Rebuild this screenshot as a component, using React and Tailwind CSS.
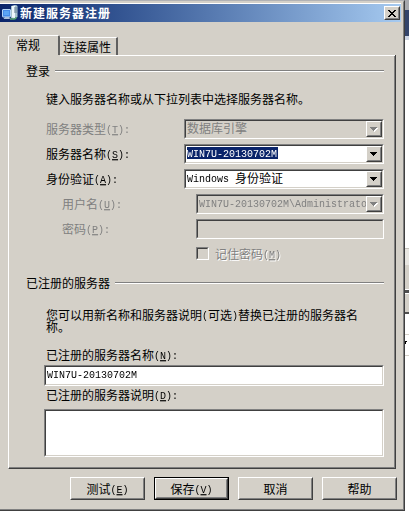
import { Fragment } from "react";

const sunken =
  "border border-t-[#808080] border-l-[#808080] border-r-white border-b-white";
const sunkenInner =
  "border border-t-[#404040] border-l-[#404040] border-r-[#d4d0c8] border-b-[#d4d0c8]";
const raised =
  "border border-t-white border-l-white border-r-[#404040] border-b-[#404040]";
const raisedInner =
  "border border-t-[#d4d0c8] border-l-[#d4d0c8] border-r-[#808080] border-b-[#808080]";

// Latin runs are half the width of a Chinese character
const latin =
  "inline-block origin-[50%_80%] scale-y-[1.18] align-[1px] whitespace-pre font-['Liberation_Mono',monospace] text-[10px] leading-[9px]";

function Text({ children }) {
  return children.split(/([\x20-\x7e]+)/).map((part, index) =>
    /^[\x20-\x7e]/.test(part) ? (
      <span key={index} className={latin}>
        {part}
      </span>
    ) : (
      <Fragment key={index}>{part}</Fragment>
    )
  );
}

function Label({ text, hotkey, colon }) {
  return (
    <>
      {text}
      {hotkey && (
        <span className={latin}>
          (
          <span className="underline decoration-1 underline-offset-1">
            {hotkey}
          </span>
          {colon ? "):" : ")"}
        </span>
      )}
    </>
  );
}

function Combo({ value, disabled, selected }) {
  return (
    <div className={`h-5 min-w-0 flex-1 ${sunken}`}>
      <div
        className={`flex h-full ${sunkenInner} ${
          disabled ? "bg-[#d4d0c8] text-[#808080]" : "bg-white text-black"
        }`}
      >
        <div className="min-w-0 flex-1 overflow-hidden pt-px pl-px">
          <div
            className={`h-[12px] whitespace-nowrap leading-[12px] ${
              selected ? "w-[91px] bg-[#0a246a] text-white" : ""
            }`}
          >
            <Text>{value}</Text>
          </div>
        </div>
        <div className={`w-4 shrink-0 ${raised}`}>
          <div
            className={`flex h-full items-center justify-center bg-[#d4d0c8] ${raisedInner}`}
          >
            <svg
              width="8"
              height="5"
              viewBox="0 0 8 5"
              shapeRendering="crispEdges"
            >
              {disabled && (
                <path
                  d="M1 1h7v1h-1v1h-1v1h-1v1h-1v-1h-1v-1h-1v-1h-1z"
                  fill="#fff"
                />
              )}
              <path
                d="M0 0h7v1h-1v1h-1v1h-1v1h-1v-1h-1v-1h-1v-1h-1z"
                fill="currentColor"
              />
            </svg>
          </div>
        </div>
      </div>
    </div>
  );
}

function Field({ label, hotkey, disabled, indent, children }) {
  return (
    <div className={`flex h-5 items-center ${indent ? "pl-4" : ""}`}>
      <div
        className={`h-3 shrink-0 whitespace-nowrap ${
          indent ? "w-[134px]" : "w-[138px]"
        } ${disabled ? "text-[#808080]" : ""}`}
      >
        <Label text={label} hotkey={hotkey} colon />
      </div>
      {children}
    </div>
  );
}

function GroupTitle({ children }) {
  return (
    <div className="flex h-3 items-center gap-[5px] whitespace-nowrap">
      <span>{children}</span>
      <div className="h-[2px] flex-1 border-t border-b border-t-[#808080] border-b-white" />
    </div>
  );
}

function DialogButton({ label, hotkey, primary }) {
  return (
    <button
      type="button"
      className={`h-[23px] w-[75px] ${primary ? "border border-black" : ""}`}
    >
      <span className={`block h-full ${raised}`}>
        <span
          className={`flex h-full items-center justify-center ${raisedInner}`}
        >
          <span className="h-3 whitespace-nowrap">
            <Label text={label} hotkey={hotkey} />
          </span>
        </span>
      </span>
    </button>
  );
}

function ServerIcon() {
  return (
    <svg width="16" height="16" viewBox="0 0 16 16">
      <path d="M9 1l5-1 1.500 1v11l-4 2-2.500-1z" fill="#a9c3ce" />
      <path d="M10 1l3-.5v12.500l-3-.5z" fill="#eef7fb" />
      <path d="M12 3h3M12 5h3M12 7h3" stroke="#60798e" />
      <rect
        x="0.5"
        y="4.500"
        width="8"
        height="7.500"
        rx="0.5"
        fill="#468be8"
        stroke="#b5d5f7"
      />
      <path d="M2 6h5v4H2z" fill="#5ba5f5" />
      <path d="M3 12h4l1 2H1.500z" fill="#a9bfdc" />
      <path d="M8 14h4q2 0 2-2" fill="none" stroke="#58a574" strokeWidth="1.500" />
    </svg>
  );
}

// Sliver of the window that lies behind the dialog
function BackgroundStrip() {
  return (
    <div className="flex w-1 flex-col overflow-hidden bg-white">
      <div className="h-[10px] bg-[#a7a9ae]" />
      <div className="h-[26px] bg-[#34456b]" />
      <div className="h-1 bg-[#cdd5e4]" />
      <div className="h-[208px] bg-white" />
      <div className="h-[17px] border-t border-[#c5c2bb] bg-[#e8e6e1]" />
      <div className="h-[25px] border-b border-white bg-[#d4d0c8]" />
      <div className="h-1 border-b border-b-white bg-[#505050]" />
      <div className="h-5 border-b-2 border-[#505050] bg-[#d4d0c8]" />
      <div className="h-[21px] border-b border-[#d4d0c8]" />
      <div className="h-[21px] border-b border-[#d4d0c8] pt-[6px]">
        <div className="h-px w-[2px] bg-black" />
        <div className="h-[2px] w-px bg-black" />
      </div>
    </div>
  );
}

export default function App() {
  return (
    <div className="flex h-[512px] w-[409px] overflow-hidden bg-white font-['Noto_Sans_CJK_SC',sans-serif] text-[12px] leading-[12px] text-black">
      <div className="flex h-[511px] w-[405px] flex-col border-t border-r border-b border-t-[#b1b2b5] border-r-[#404040] border-b-[#404040]">
        <div className="flex min-h-0 flex-1 flex-col border-t border-r border-b border-t-[#d4d0c8] border-r-[#808080] border-b-[#808080] bg-[#d4d0c8]">
          <div className="mt-px mr-[2px] h-px shrink-0 bg-white" />
          <div className="mr-[2px] flex h-[18px] shrink-0 items-center bg-linear-to-r from-[#0a246a] to-[#a6caf0] pr-px pl-[2px]">
            <ServerIcon />
            <h1 className="ml-[2px] flex-1 font-bold tracking-[1px] text-white">
              新建服务器注册
            </h1>
            <button
              type="button"
              aria-label="关闭"
              className={`h-[14px] w-4 bg-[#d4d0c8] ${raised}`}
            >
              <span
                className={`flex h-full items-center justify-center ${raisedInner}`}
              >
                <svg
                  width="8"
                  height="7"
                  viewBox="0 0 8 7"
                  shapeRendering="crispEdges"
                >
                  <path d="M0 0h2v1h1v1h2v-1h1v-1h2v1h-1v1h-1v1h-1v1h1v1h1v1h1v1h-2v-1h-1v-1h-2v1h-1v1h-2v-1h1v-1h1v-1h1v-1h-1v-1h-1v-1h-1z" />
                </svg>
              </span>
            </button>
          </div>

          <div className="mt-[13px] ml-2 flex h-5 w-[388px] shrink-0 items-end">
            <div className="h-5 w-[52px] rounded-t-[2px] border-t border-r-2 border-l border-t-white border-r-[#606060] border-l-white pt-[3px] pl-[7px]">
              常规
            </div>
            <div className="h-[18px] w-[58px] border-t border-r-2 border-t-white border-r-[#606060] pt-[3px] pl-[3px]">
              连接属性
            </div>
          </div>

          <div className="ml-2 flex h-[414px] w-[388px] shrink-0 flex-col border-r border-b border-l border-r-[#404040] border-b-[#404040] border-l-white">
            <div className="ml-[51px] h-px shrink-0 bg-white" />
            <div className="flex flex-1 flex-col border-r border-b border-[#808080] pr-[10px] pl-[17px]">
              <div className="mt-[9px]">
                <GroupTitle>登录</GroupTitle>
              </div>
              <div className="mt-[16px] ml-5">
                键入服务器名称或从下拉列表中选择服务器名称。
              </div>
              <div className="mt-[14px] ml-5 flex flex-col gap-[5px]">
                <Field label="服务器类型" hotkey="T" disabled>
                  <Combo value="数据库引擎" disabled />
                </Field>
                <Field label="服务器名称" hotkey="S">
                  <Combo value="WIN7U-20130702M" selected />
                </Field>
                <Field label="身份验证" hotkey="A">
                  <Combo value="Windows 身份验证" />
                </Field>
                <Field label="用户名" hotkey="U" disabled indent>
                  <Combo value="WIN7U-20130702M\Administrator" disabled />
                </Field>
                <Field label="密码" hotkey="P" disabled indent>
                  <div className={`h-5 flex-1 ${sunken}`}>
                    <div className={`h-full ${sunkenInner}`} />
                  </div>
                </Field>
              </div>
              <div className="mt-2 ml-[170px] flex h-[13px] items-center gap-[6px] text-[#808080] text-shadow-[1px_1px_0_white]">
                <div className={`size-[13px] ${sunken}`}>
                  <div className={`h-full ${sunkenInner}`} />
                </div>
                <span className="h-3">
                  <Label text="记住密码" hotkey="M" />
                </span>
              </div>

              <div className="mt-[17px]">
                <GroupTitle>已注册的服务器</GroupTitle>
              </div>
              <p className="mt-5 ml-5 h-6 w-[325px] whitespace-nowrap">
                <Text>您可以用新名称和服务器说明(可选)替换已注册的服务器名</Text>
                <br />
                称。
              </p>
              <div className="mt-4 ml-5 h-3">
                <Label text="已注册的服务器名称" hotkey="N" colon />
              </div>
              <div className={`mt-1 ml-[18px] h-[21px] ${sunken}`}>
                <div className={`h-full bg-white pt-px pl-px ${sunkenInner}`}>
                  <Text>WIN7U-20130702M</Text>
                </div>
              </div>
              <div className="mt-[3px] ml-5 h-3">
                <Label text="已注册的服务器说明" hotkey="D" colon />
              </div>
              <div className={`mt-2 ml-[18px] h-12 ${sunken}`}>
                <div className={`h-full bg-white ${sunkenInner}`} />
              </div>
            </div>
          </div>

          <div className="mt-2 ml-[70px] flex gap-[9px]">
            <DialogButton label="测试" hotkey="E" />
            <DialogButton label="保存" hotkey="V" primary />
            <DialogButton label="取消" />
            <DialogButton label="帮助" />
          </div>
        </div>
      </div>
      <BackgroundStrip />
    </div>
  );
}
